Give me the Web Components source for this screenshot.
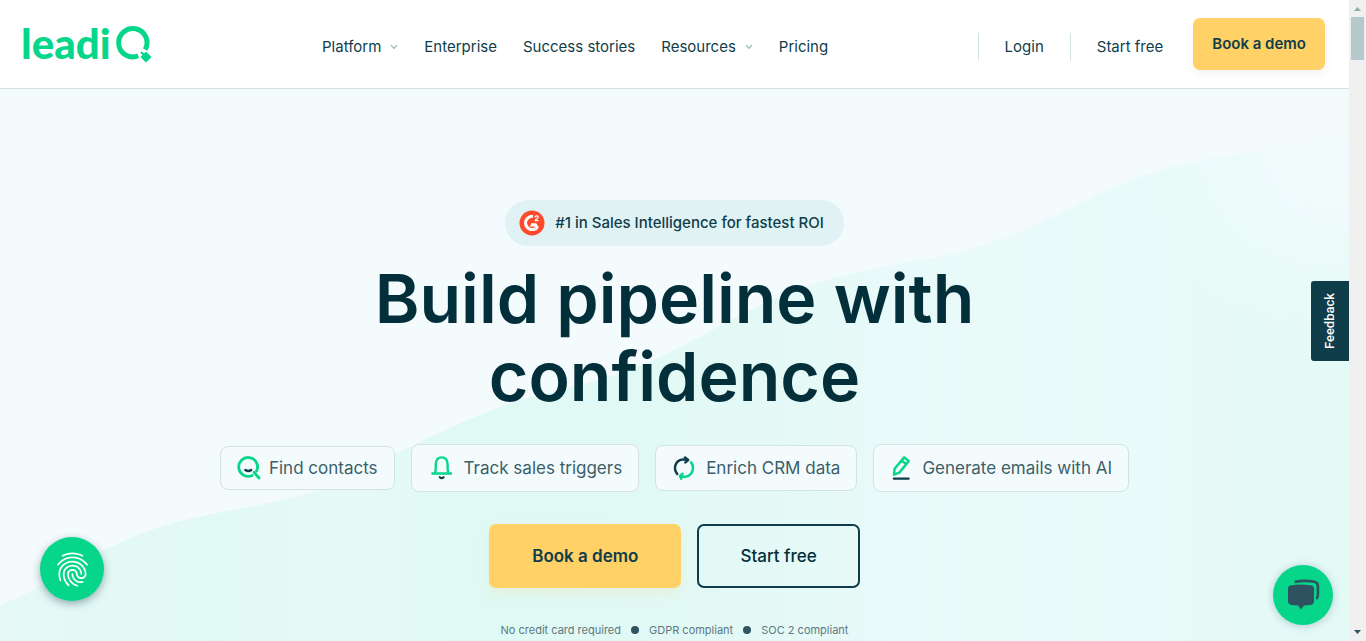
<!DOCTYPE html>
<html lang="en">
<head>
<meta charset="utf-8">
<meta name="viewport" content="width=device-width, initial-scale=1">
<title>LeadIQ</title>
<style>
  :root {
    --ink: #0f3d4a;
    --ink-deep: #022f3a;
    --ink-soft: #3b5f69;
    --green: #06d68a;
    --yellow: #ffd166;
    --line: #d3e2e3;
    --mist: #f3fbfd;
  }
  html, body { height: 100%; margin: 0; }
  body {
    font-family: Inter, "Liberation Sans", sans-serif;
    color: var(--ink);
    background: var(--mist);
    overflow: hidden;
  }
</style>
</head>
<body>
<page-shell>
  <site-header>
    <nav-link href="#platform" menu>Platform</nav-link>
    <nav-link href="#enterprise">Enterprise</nav-link>
    <nav-link href="#stories">Success stories</nav-link>
    <nav-link href="#resources" menu>Resources</nav-link>
    <nav-link href="#pricing">Pricing</nav-link>
    <nav-link slot="actions" href="#login" divided>Login</nav-link>
    <nav-link slot="actions" href="#start" divided>Start free</nav-link>
    <action-button slot="cta" size="small">Book a demo</action-button>
  </site-header>
  <hero-section>
    <rating-badge slot="badge">#1 in Sales Intelligence for fastest ROI</rating-badge>
    <span slot="title">Build pipeline with<br>confidence</span>
    <feature-chip slot="features" icon="search">Find contacts</feature-chip>
    <feature-chip slot="features" icon="bell">Track sales triggers</feature-chip>
    <feature-chip slot="features" icon="sync">Enrich CRM data</feature-chip>
    <feature-chip slot="features" icon="pencil">Generate emails with AI</feature-chip>
    <action-button slot="buttons">Book a demo</action-button>
    <action-button slot="buttons" kind="outline">Start free</action-button>
    <assurance-item slot="notes">No credit card required</assurance-item>
    <assurance-item slot="notes">GDPR compliant</assurance-item>
    <assurance-item slot="notes">SOC 2 compliant</assurance-item>
  </hero-section>
  <scroll-track slot="scroll"></scroll-track>
  <round-button slot="overlay" corner="left" icon="fingerprint" label="Privacy settings"></round-button>
  <round-button slot="overlay" corner="right" icon="chat" label="Open chat"></round-button>
  <feedback-tab slot="overlay">Feedback</feedback-tab>
</page-shell>

<script>
const ICONS = {
  search: `<svg width="24" height="24" viewBox="0 0 24 24" fill="none" stroke-linecap="round">
    <path d="M19.600 15A9.400 9.400 0 1 0 15.200 19.400M17 16.400L22 22" stroke="#06d68a" stroke-width="2.800"/>
    <path d="M8.400 14Q11.300 16.200 14.200 14" stroke="#0f3d4a" stroke-width="2.400"/></svg>`,
  bell: `<svg width="28" height="28" viewBox="0 0 28 28" fill="none" stroke-linecap="round" stroke-linejoin="round">
    <path d="M4.400 19.500H23M6.800 19C8.400 16.500 7.600 13.500 7.800 10.500C8 5.800 10.500 3.400 13.700 3.400S19.400 5.800 19.600 10.500C19.800 13.500 19 16.500 20.600 19" stroke="#06d68a" stroke-width="2.400"/>
    <path d="M11.800 23.200Q13.700 25 15.600 23.200" stroke="#0f3d4a" stroke-width="2.200"/></svg>`,
  sync: `<svg width="26" height="26" viewBox="0 0 26 26" fill="none" stroke-linecap="round" stroke-linejoin="round">
    <path d="M5.200 19C1 14 3 5.400 10.500 4.500C12.500 4.200 14.200 4.500 15.600 5.200M13 2.500L16.200 5L13.400 7.400" stroke="#0f3d4a" stroke-width="2.500"/>
    <path d="M19 7.400C22.800 12 21 20.600 13.300 21.700C11.500 21.900 9.800 21.700 8.400 21M10.600 18.800L8 21L9.200 23.800" stroke="#06d68a" stroke-width="2.500"/></svg>`,
  pencil: `<svg width="24" height="28" viewBox="0 0 24 28" fill="none" stroke-linecap="round" stroke-linejoin="round">
    <path d="M4 20.600L4.600 14.800L14.200 3.400L18.800 7L9.400 18.600ZM11.800 6.600L16 10" stroke="#06d68a" stroke-width="2.500"/>
    <path d="M4 24.600H18.500" stroke="#0f3d4a" stroke-width="2.400"/></svg>`,
  rating: `<svg width="26" height="26" viewBox="0 0 26 26" fill="none">
    <circle cx="13" cy="13" r="12.500" fill="#ff492c"/>
    <path d="M14 6.400A6.600 6.600 0 1 0 16.600 18.600" stroke="#fff" stroke-width="3"/>
    <path d="M12.500 13.200H17.200L19.700 17.300L17.600 20.400L15.600 16.600H10.800Z" fill="#fff"/>
    <path d="M16 7.300C16.400 5.400 19.300 5.500 19 7.400C18.800 8.600 16.800 9 16.300 10.700H19.400" stroke="#fff" stroke-width="1.300"/></svg>`,
  chevron: `<svg width="8" height="6" viewBox="0 0 8 6" fill="none"><path d="M1 1.200L4 4.400L7 1.200" stroke="#9bb5b8" stroke-width="1.200"/></svg>`,
  fingerprint: `<svg width="41" height="41" viewBox="0 0 24 24" fill="#fff"><path d="M17.81 4.470c-.08 0-.16-.02-.23-.06C15.660 3.420 14 3 12.010 3c-1.980 0-3.860.47-5.570 1.410-.24.13-.54.04-.68-.2-.13-.24-.04-.55.2-.68C7.820 2.520 9.860 2 12.010 2c2.130 0 3.990.47 6.030 1.520.25.13.34.43.21.67-.09.18-.26.28-.44.28zM3.500 9.720c-.1 0-.2-.03-.29-.09-.23-.16-.28-.47-.12-.7.99-1.400 2.250-2.500 3.750-3.270C9.980 4.040 14 4.030 17.150 5.650c1.500.77 2.760 1.860 3.750 3.250.16.22.11.54-.12.7-.23.16-.54.11-.7-.12-.9-1.260-2.040-2.250-3.390-2.940-2.870-1.470-6.540-1.470-9.400.01-1.360.7-2.500 1.700-3.400 2.960-.08.14-.23.21-.39.21zm6.250 12.070c-.13 0-.26-.05-.35-.15-.87-.87-1.340-1.430-2.010-2.640-.69-1.230-1.050-2.730-1.050-4.340 0-2.970 2.540-5.390 5.660-5.390s5.660 2.420 5.660 5.390c0 .28-.22.5-.5.5s-.5-.22-.5-.5c0-2.420-2.090-4.390-4.660-4.390-2.570 0-4.660 1.970-4.660 4.390 0 1.440.32 2.770.93 3.850.64 1.150 1.080 1.640 1.850 2.420.19.2.19.51 0 .71-.11.1-.24.15-.37.15zm7.170-1.850c-1.190 0-2.240-.3-3.100-.89-1.490-1.010-2.380-2.650-2.380-4.390 0-.28.22-.5.5-.5s.5.22.5.5c0 1.410.72 2.740 1.940 3.560.71.48 1.540.71 2.540.71.24 0 .64-.03 1.040-.1.27-.05.53.13.58.41.05.27-.13.53-.41.58-.57.11-1.070.12-1.210.12zM14.910 22c-.04 0-.09-.01-.13-.02-1.590-.44-2.630-1.030-3.720-2.100-1.400-1.390-2.170-3.240-2.170-5.220 0-1.620 1.380-2.940 3.080-2.940 1.700 0 3.080 1.320 3.080 2.940 0 1.070.93 1.940 2.080 1.940s2.080-.87 2.080-1.940c0-3.770-3.250-6.830-7.250-6.830-2.840 0-5.440 1.580-6.610 4.030-.39.81-.59 1.760-.59 2.800 0 .78.07 2.010.67 3.610.1.26-.03.55-.29.64-.26.1-.55-.04-.64-.29-.49-1.310-.73-2.610-.73-3.960 0-1.200.23-2.290.68-3.240 1.330-2.790 4.280-4.600 7.510-4.600 4.550 0 8.250 3.510 8.250 7.830 0 1.620-1.380 2.940-3.080 2.940s-3.080-1.320-3.080-2.940c0-1.070-.93-1.940-2.080-1.940s-2.080.87-2.080 1.940c0 1.710.66 3.310 1.870 4.510.95.94 1.860 1.460 3.270 1.850.27.07.42.35.35.61-.05.23-.26.38-.47.38z"/></svg>`,
  chat: `<svg width="60" height="60" viewBox="0 0 60 60"><g fill="#2f5261">
    <path d="M15 24Q15 20.500 18.500 20.200Q28 18.800 37.500 20.200Q41 20.500 41 24V36Q41 39.600 37.500 39.900Q34 40.300 31 40.400L28 44.600L25 40.400Q22 40.300 18.500 39.900Q15 39.600 15 36Z"/></g>
    <path d="M21.500 17Q31.500 14.800 41.500 16.800Q44.600 17.400 44.900 21V29Q44.900 32 43.600 34" fill="none" stroke="#2f5261" stroke-width="2.600"/></svg>`
};

function define(name, css, html) {
  const template = document.createElement('template');
  customElements.define(name, class extends HTMLElement {
    constructor() {
      super();
      template.innerHTML = `<style>*{box-sizing:border-box}${css}</style>${typeof html === 'function' ? html(this) : html}`;
      this.attachShadow({ mode: 'open' }).append(template.content.cloneNode(true));
    }
  });
}

define('page-shell', `
  :host { display: grid; grid-template-columns: minmax(0, 1fr) 17px; height: 100vh; overflow: hidden; }
  main { display: flex; flex-direction: column; min-height: 0; overflow: hidden; }
`, `<main><slot></slot></main><slot name="scroll"></slot><slot name="overlay"></slot>`);

define('site-header', `
  :host { display: flex; align-items: center; flex: none; padding: 18px 24px 18px 20px; background: #fff; border-bottom: 1px solid var(--line); }
  .logo { display: block; flex: none; }
  .logo svg { display: block; }
  nav, .actions { display: flex; align-items: center; padding-top: 6px; }
  nav { gap: 26px; margin-left: 166px; }
  .actions { margin-left: auto; gap: 26px; }
  .cta { margin: 0 0 0 30px; display: flex; }
`, `
  <a class="logo" href="#home" aria-label="leadiQ home">
    <svg width="136" height="52" viewBox="-4 -7 136 52" fill="none">
      <text x="-3" y="34" fill="#06d68a" font-family="Lato, sans-serif" font-weight="900" font-size="42">leadi</text>
      <path d="M121.200 24.600A14.200 14.200 0 1 0 114.200 30.800" stroke="#06d68a" stroke-width="5"/>
      <path d="M122 26.400L127.600 32L122 37.600L116.400 32Z" fill="#06d68a"/>
      <path d="M117 27L120 30" stroke="#06d68a" stroke-width="2"/>
    </svg>
  </a>
  <nav aria-label="Main"><slot></slot></nav>
  <div class="actions"><slot name="actions"></slot></div>
  <div class="cta"><slot name="cta"></slot></div>
`);

define('nav-link', `
  :host { display: block; }
  :host([divided]) { border-left: 1px solid var(--line); padding-left: 26px; }
  a { display: flex; align-items: center; gap: 9px; color: var(--ink); text-decoration: none; font-size: 15px; line-height: 28px; white-space: nowrap; }
`, el => `<a href="${el.getAttribute('href')}"><slot></slot>${el.hasAttribute('menu') ? ICONS.chevron : ''}</a>`);

define('action-button', `
  :host { display: block; }
  button { font: 600 17px/24px Inter, "Liberation Sans", sans-serif; color: var(--ink); background: var(--yellow);
    border: 0; border-radius: 7px; padding: 20px 43px; box-shadow: 0 6px 14px rgba(255, 209, 102, .16); cursor: pointer; white-space: nowrap; }
  :host([size="small"]) button { font-size: 15px; padding: 14px 19px; box-shadow: 0 4px 10px rgba(15, 61, 74, .06); }
  :host([kind="outline"]) button { font-weight: 500; color: var(--ink-deep); background: transparent; border: 2px solid var(--ink); padding: 18px 41px; box-shadow: none; }
`, `<button type="button"><slot></slot></button>`);

define('hero-section', `
  :host { display: flex; flex: 1 0 auto; flex-direction: column; align-items: center; position: relative; padding: 111px 24px 3px; text-align: center; }
  .wave { position: absolute; inset: 0; width: 100%; height: 100%; z-index: -1; }
  h1 { margin: 13px 0 29px; font-weight: 600; font-size: 68px; line-height: 78px; color: var(--ink-deep); }
  .row { display: flex; align-items: center; justify-content: center; gap: 16px; }
  .notes { gap: 10px; margin-top: 34px; }
  .buttons { margin-top: 32px; }
`, `
  <svg class="wave" viewBox="0 89 1349 552" preserveAspectRatio="none" aria-hidden="true">
    <defs>
      <linearGradient id="tint" x1="0" x2="1">
        <stop offset="0" stop-color="#e6f9f7"/><stop offset=".16" stop-color="#e1f9f5"/>
        <stop offset=".25" stop-color="#e6faf7"/><stop offset=".36" stop-color="#dff9f4"/>
        <stop offset=".52" stop-color="#e2f9f5"/><stop offset=".66" stop-color="#e8faf9"/>
        <stop offset=".78" stop-color="#eafafa"/><stop offset="1" stop-color="#e4faf7"/>
      </linearGradient>
      <radialGradient id="glow" gradientUnits="userSpaceOnUse" cx="1349" cy="140" r="210">
        <stop offset="0" stop-color="#f3fbfd"/><stop offset=".4" stop-color="#f3fbfd" stop-opacity=".7"/>
        <stop offset="1" stop-color="#f3fbfd" stop-opacity="0"/>
      </radialGradient>
    </defs>
    <path fill="url(#tint)" d="M0 605C40 590 75 562 113 546C190 508 260 512 322 488C400 455 430 432 514 402C580 384 610 380 653 360C700 340 750 305 801 289C860 265 930 262 967 250C1050 225 1080 198 1133 180C1180 160 1230 156 1272 149C1300 146 1330 138 1349 134V641H0Z"/>
    <path fill="url(#glow)" d="M1000 100H1349V400H1000Z"/>
  </svg>
  <slot name="badge"></slot>
  <h1><slot name="title"></slot></h1>
  <div class="row"><slot name="features"></slot></div>
  <div class="row buttons"><slot name="buttons"></slot></div>
  <div class="row notes"><slot name="notes"></slot></div>
`);

define('rating-badge', `
  :host { display: flex; align-items: center; gap: 10px; padding: 10px 20px 10px 14px; border-radius: 23px; background: #e1f2f5; font-size: 15px; font-weight: 500; line-height: 26px; }
  svg { display: block; }
`, `${ICONS.rating}<span><slot></slot></span>`);

define('feature-chip', `
  :host { display: flex; align-items: center; gap: 8px; padding: 9px 16px; border: 1px solid var(--line); border-radius: 8px; background: var(--mist); color: var(--ink-soft); font-size: 17px; line-height: 24px; white-space: nowrap; }
  svg { display: block; }
`, el => `${ICONS[el.getAttribute('icon')]}<span><slot></slot></span>`);

define('assurance-item', `
  :host { display: flex; align-items: center; gap: 10px; font-size: 11px; line-height: 16px; color: #5c7880; }
  :host(:not(:first-of-type))::before { content: ""; width: 8px; height: 8px; border-radius: 50%; background: #2f5560; }
`, `<slot></slot>`);

define('round-button', `
  :host { position: fixed; display: block; }
  :host([corner="left"]) { left: 40px; bottom: 40px; --size: 64px; }
  :host([corner="right"]) { right: 33px; bottom: 16px; --size: 60px; }
  button { display: grid; place-items: center; width: var(--size); height: var(--size); padding: 0; border: 0; border-radius: 50%; background: var(--green); box-shadow: 0 3px 8px rgba(15, 61, 74, .4); cursor: pointer; }
  :host([corner="right"]) button { box-shadow: 0 1px 8px rgba(15, 61, 74, .25); }
  svg { display: block; }
`, el => `<button type="button" aria-label="${el.getAttribute('label')}">${ICONS[el.getAttribute('icon')]}</button>`);

define('feedback-tab', `
  :host { position: fixed; right: 17px; top: 50%; display: block; transform: translateY(-50%); }
  button { display: block; writing-mode: vertical-rl; transform: rotate(180deg); font: 500 13px/18px Roboto, sans-serif; color: #fff; background: var(--ink); border: 0; border-radius: 0 3px 3px 0; padding: 12px 10px; cursor: pointer; }
`, `<button type="button"><slot></slot></button>`);

define('scroll-track', `
  :host { display: flex; flex-direction: column; align-items: center; background: #f1f0f0; }
  svg { flex: none; display: block; }
  .thumb { width: 13px; height: 43px; background: #b5c8cc; }
  .rest { flex: 1; }
`, `
  <svg width="17" height="17" viewBox="0 0 17 17"><path d="M5 11L8.500 7L12 11Z" fill="#93a9b0"/></svg>
  <div class="thumb"></div><div class="rest"></div>
  <svg width="17" height="17" viewBox="0 0 17 17"><path d="M5 6L8.500 10L12 6Z" fill="#2f5560"/></svg>
`);
</script>
</body>
</html>
